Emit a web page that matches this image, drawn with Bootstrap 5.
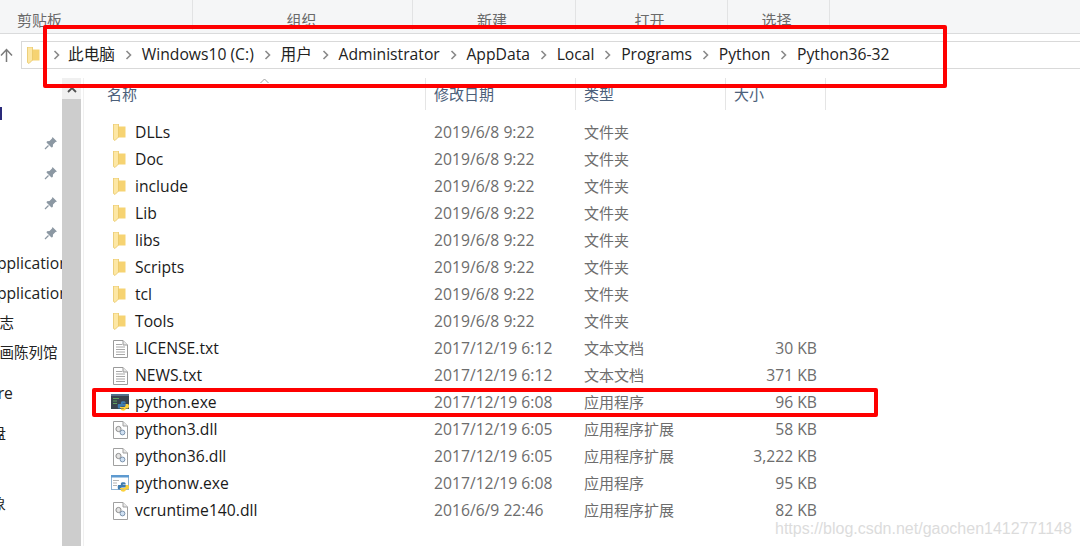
<!DOCTYPE html>
<html lang="zh-CN">
<head>
  <meta charset="UTF-8">
  <title>Python36-32</title>
  <link href="https://cdn.jsdelivr.net/npm/bootstrap@5.3.0/dist/css/bootstrap.min.css" rel="stylesheet">
  <style>
    html, body { height: 100%; }
    body {
      position: relative;
      width: 1080px;
      height: 546px;
      overflow: hidden;
      background: #fff;
      font-family: "Open Sans", "Noto Sans CJK SC", sans-serif;
      font-size: 15.7px;
      color: #1a1a1a;
    }
    .ribbon { height: 34px; background: #f5f6f7; border-bottom: 1px solid #dadbdc; }
    .rib-group { height: 30px; border-right: 1px solid #e2e3e4; color: #6a6a6a; font-size: 15px; line-height: 40px; text-align: center; }
    .rib-1 { width: 193px; padding-right: 113px; }
    .rib-2 { width: 220px; padding-right: 2px; }
    .rib-3 { width: 163px; padding-right: 4px; }
    .rib-4 { width: 152px; padding-right: 4px; }
    .rib-5 { width: 102px; padding-right: 4px; }
    .addr-row { height: 44px; padding-top: 7px; }
    .up-arrow { width: 21px; height: 28px; }
    .addr-bar { height: 28px; flex: 1; border: 1px solid #d9d9d9; border-right: 0; padding-left: 5px; color: #222; }
    .crumb-sep { width: 26.7px; }
    .crumb-sep.first { width: 24px; margin-left: 4px; }
    .content { height: 468px; }
    .side-pane { width: 62px; overflow: hidden; flex: none; color: #222; }
    .side-row { height: 30px; line-height: 30px; white-space: nowrap; }
    .side-row.first { margin-top: 20px; padding-top: 9px; }
    .side-row.gap-10 { margin-top: 10px; }
    .side-row.gap-40 { margin-top: 40px; }
    .side-pin { padding-left: 44px; }
    .side-edge { width: 2px; height: 13px; background: #2a2a7a; }
    .clip-app { margin-left: -13px; }
    .clip-cjk { margin-left: -15px; font-size: 14.5px; }
    .clip-half { margin-left: -24px; font-size: 15px; }
    .clip-re { margin-left: -26px; }
    .scroll-track { width: 19px; flex: none; background: #cdcdcd; }
    .scroll-up { height: 21px; background: #f0f0f0; }
    .divider { width: 3px; flex: none; border-right: 1px solid #f0f0f0; }
    .file-pane { flex: 1; }
    .col-head { height: 32px; color: #4c607a; font-size: 15px; line-height: 32px; }
    .head-name { width: 342px; padding-left: 23px; border-right: 1px solid #e5e5e5; }
    .head-date { width: 150px; padding-left: 8px; border-right: 1px solid #e5e5e5; }
    .head-size { width: 100px; padding-left: 8px; border-right: 1px solid #e5e5e5; }
    .sort-mark { position: absolute; left: 260px; top: 78px; }
    .file-list { padding-top: 9px; }
    .file-row { height: 27px; line-height: 27px; }
    .f-icon { width: 51px; flex: none; padding-left: 29px; }
    .f-icon svg { display: block; }
    .f-icon .wide-ico { margin-left: -2px; }
    .f-name { width: 299px; flex: none; }
    .f-date { width: 150px; flex: none; color: #6d6d6d; }
    .f-type { width: 150px; flex: none; color: #6d6d6d; font-size: 15px; }
    .f-size { width: 83px; flex: none; color: #6d6d6d; text-align: right; }
    .red-box { position: absolute; border: 4px solid #fe0000; border-radius: 2px; }
    .red-addr { left: 43px; top: 25px; width: 904px; height: 63px; }
    .red-exe { left: 92px; top: 388px; width: 786px; height: 29px; }
    .water { position: absolute; left: 775px; top: 519px; font-family: "Liberation Sans", sans-serif; font-size: 16px; line-height: 20px; color: #dcdcdc; }
  </style>
</head>
<body>
  <svg width="0" height="0" class="position-absolute">
    <defs>
      <symbol id="folder" viewBox="0 0 13 17">
        <rect x="5" y="2.500" width="7.500" height="11" fill="#f6d372"/>
        <path d="M.5 0H5.500V13L2 16.500L.5 15.500Z" fill="#fde7a4" stroke="#e9c766" stroke-width=".8"/>
      </symbol>
      <symbol id="textfile" viewBox="0 0 15 18">
        <path d="M.5.5H10L14.500 5V17.500H.5Z" fill="#fff" stroke="#9a9a9a"/>
        <path d="M10 .5V5H14.500" fill="#e8e8e8" stroke="#9a9a9a"/>
        <path d="M3 4.500H9M3 7H12M3 9.500H12M3 12H12M3 14.500H12" stroke="#a8a8a8"/>
      </symbol>
      <symbol id="dllfile" viewBox="0 0 15 18">
        <path d="M.5.5H10L14.500 5V17.500H.5Z" fill="#fff" stroke="#a0a0a0"/>
        <path d="M10 .5V5H14.500" fill="#e8e8e8" stroke="#a0a0a0"/>
        <circle cx="5.500" cy="8" r="2.600" fill="#e4e4e4" stroke="#8d8d8d"/>
        <circle cx="9.500" cy="11.500" r="2.400" fill="#cfe0f2" stroke="#7c93ad"/>
      </symbol>
      <symbol id="pysnake" viewBox="0 0 12 12">
        <path d="M3.500 5V2.500C3.500 .5 8.500 .5 8.500 2.500V3.500H5.500V4H9.500V6.500H5C4 6.500 3.500 7 3.500 8V8.500H1.500C.5 8.500 0 7.500 0 6C0 4.500 .5 4 1.500 4H3.500Z" fill="#3f7cb0"/>
        <path d="M8.500 7V9.500C8.500 11.500 3.500 11.500 3.500 9.500V8.500H6.500V8H2.500V7H7C8 7 8.500 6 8.500 5V4H10.500C11.500 4 12 4.800 12 6C12 7.500 11.500 8.500 10.500 8.500H8.500Z" fill="#fbd13c"/>
      </symbol>
      <symbol id="pyexe" viewBox="0 0 18 18">
        <rect x="0" y="0" width="18" height="15" fill="#39434d"/>
        <rect x="0" y="0" width="18" height="2" fill="#56718c"/>
        <path d="M2 4.500H8M2 7H6M2 9.500H6" stroke="#5fa05f"/>
        <use href="#pysnake" x="6.500" y="6" width="11.500" height="12"/>
      </symbol>
      <symbol id="pywexe" viewBox="0 0 18 18">
        <rect x=".5" y=".5" width="17" height="14" fill="#fff" stroke="#8fb3d3"/>
        <rect x="0" y="0" width="18" height="2.500" fill="#5d9ad0"/>
        <path d="M2 5.500H8M2 8H6M2 10.500H6" stroke="#b5b5b5"/>
        <use href="#pysnake" x="6.500" y="6" width="11.500" height="12"/>
      </symbol>
      <symbol id="pin" viewBox="0 0 14 14">
        <path d="M8.500 1 L13 5.500 L11.500 6 L9 8.500 L8.800 11 L7.500 11.500 L2.500 6.500 L3 5.200 L5.500 5 L8 2.500Z" fill="#8c98a3"/>
        <path d="M4.500 9.500 L1 13" stroke="#8c98a3" stroke-width="1.200"/>
      </symbol>
      <symbol id="chev" viewBox="0 0 7 10">
        <path d="M1.500 1 L5.500 5 L1.500 9" fill="none" stroke="#8a8a8a" stroke-width="1.600"/>
      </symbol>
    </defs>
  </svg>

  <div class="ribbon d-flex">
    <div class="rib-group rib-1">剪贴板</div>
    <div class="rib-group rib-2">组织</div>
    <div class="rib-group rib-3">新建</div>
    <div class="rib-group rib-4">打开</div>
    <div class="rib-group rib-5">选择</div>
  </div>

  <div class="addr-row d-flex">
    <div class="up-arrow d-flex align-items-center">
      <svg width="13" height="14" viewBox="0 0 13 14"><path d="M6.500 14V2M1 7.500L6.500 1.500L12 7.500" fill="none" stroke="#7a7a7a" stroke-width="1.500"/></svg>
    </div>
    <div class="addr-bar d-flex align-items-center">
      <svg width="13" height="17"><use href="#folder"/></svg>
      <span class="crumb-sep first d-flex justify-content-center"><svg width="7" height="10"><use href="#chev"/></svg></span>
      <span>此电脑</span>
      <span class="crumb-sep d-flex justify-content-center"><svg width="7" height="10"><use href="#chev"/></svg></span>
      <span>Windows10 (C:)</span>
      <span class="crumb-sep d-flex justify-content-center"><svg width="7" height="10"><use href="#chev"/></svg></span>
      <span>用户</span>
      <span class="crumb-sep d-flex justify-content-center"><svg width="7" height="10"><use href="#chev"/></svg></span>
      <span>Administrator</span>
      <span class="crumb-sep d-flex justify-content-center"><svg width="7" height="10"><use href="#chev"/></svg></span>
      <span>AppData</span>
      <span class="crumb-sep d-flex justify-content-center"><svg width="7" height="10"><use href="#chev"/></svg></span>
      <span>Local</span>
      <span class="crumb-sep d-flex justify-content-center"><svg width="7" height="10"><use href="#chev"/></svg></span>
      <span>Programs</span>
      <span class="crumb-sep d-flex justify-content-center"><svg width="7" height="10"><use href="#chev"/></svg></span>
      <span>Python</span>
      <span class="crumb-sep d-flex justify-content-center"><svg width="7" height="10"><use href="#chev"/></svg></span>
      <span>Python36-32</span>
    </div>
  </div>

  <div class="content d-flex">
    <div class="side-pane">
      <div class="side-row first"><div class="side-edge"></div></div>
      <div class="side-row side-pin d-flex align-items-center"><svg width="14" height="14"><use href="#pin"/></svg></div>
      <div class="side-row side-pin d-flex align-items-center"><svg width="14" height="14"><use href="#pin"/></svg></div>
      <div class="side-row side-pin d-flex align-items-center"><svg width="14" height="14"><use href="#pin"/></svg></div>
      <div class="side-row side-pin d-flex align-items-center"><svg width="14" height="14"><use href="#pin"/></svg></div>
      <div class="side-row clip-app">Application</div>
      <div class="side-row clip-app">Application</div>
      <div class="side-row clip-cjk">日志</div>
      <div class="side-row clip-cjk">图画陈列馆</div>
      <div class="side-row gap-10 clip-re">Store</div>
      <div class="side-row gap-10 clip-half">磁盘</div>
      <div class="side-row gap-40 clip-half">对象</div>
    </div>
    <div class="scroll-track">
      <div class="scroll-up d-flex justify-content-center pt-2">
        <svg width="10" height="7" viewBox="0 0 10 7"><path d="M1 6L5 2L9 6" fill="none" stroke="#505050" stroke-width="1.800"/></svg>
      </div>
    </div>
    <div class="divider"></div>
    <div class="file-pane">
      <div class="col-head d-flex">
        <div class="head-name">名称</div>
        <div class="head-date">修改日期</div>
        <div class="head-date">类型</div>
        <div class="head-size">大小</div>
      </div>
      <div class="file-list">
        <div class="file-row d-flex"><div class="f-icon d-flex align-items-center"><svg width="13" height="17"><use href="#folder"/></svg></div><div class="f-name">DLLs</div><div class="f-date">2019/6/8 9:22</div><div class="f-type">文件夹</div></div>
        <div class="file-row d-flex"><div class="f-icon d-flex align-items-center"><svg width="13" height="17"><use href="#folder"/></svg></div><div class="f-name">Doc</div><div class="f-date">2019/6/8 9:22</div><div class="f-type">文件夹</div></div>
        <div class="file-row d-flex"><div class="f-icon d-flex align-items-center"><svg width="13" height="17"><use href="#folder"/></svg></div><div class="f-name">include</div><div class="f-date">2019/6/8 9:22</div><div class="f-type">文件夹</div></div>
        <div class="file-row d-flex"><div class="f-icon d-flex align-items-center"><svg width="13" height="17"><use href="#folder"/></svg></div><div class="f-name">Lib</div><div class="f-date">2019/6/8 9:22</div><div class="f-type">文件夹</div></div>
        <div class="file-row d-flex"><div class="f-icon d-flex align-items-center"><svg width="13" height="17"><use href="#folder"/></svg></div><div class="f-name">libs</div><div class="f-date">2019/6/8 9:22</div><div class="f-type">文件夹</div></div>
        <div class="file-row d-flex"><div class="f-icon d-flex align-items-center"><svg width="13" height="17"><use href="#folder"/></svg></div><div class="f-name">Scripts</div><div class="f-date">2019/6/8 9:22</div><div class="f-type">文件夹</div></div>
        <div class="file-row d-flex"><div class="f-icon d-flex align-items-center"><svg width="13" height="17"><use href="#folder"/></svg></div><div class="f-name">tcl</div><div class="f-date">2019/6/8 9:22</div><div class="f-type">文件夹</div></div>
        <div class="file-row d-flex"><div class="f-icon d-flex align-items-center"><svg width="13" height="17"><use href="#folder"/></svg></div><div class="f-name">Tools</div><div class="f-date">2019/6/8 9:22</div><div class="f-type">文件夹</div></div>
        <div class="file-row d-flex"><div class="f-icon d-flex align-items-center"><svg width="15" height="18"><use href="#textfile"/></svg></div><div class="f-name">LICENSE.txt</div><div class="f-date">2017/12/19 6:12</div><div class="f-type">文本文档</div><div class="f-size">30 KB</div></div>
        <div class="file-row d-flex"><div class="f-icon d-flex align-items-center"><svg width="15" height="18"><use href="#textfile"/></svg></div><div class="f-name">NEWS.txt</div><div class="f-date">2017/12/19 6:12</div><div class="f-type">文本文档</div><div class="f-size">371 KB</div></div>
        <div class="file-row d-flex"><div class="f-icon d-flex align-items-center"><svg class="wide-ico" width="18" height="18"><use href="#pyexe"/></svg></div><div class="f-name">python.exe</div><div class="f-date">2017/12/19 6:08</div><div class="f-type">应用程序</div><div class="f-size">96 KB</div></div>
        <div class="file-row d-flex"><div class="f-icon d-flex align-items-center"><svg width="15" height="18"><use href="#dllfile"/></svg></div><div class="f-name">python3.dll</div><div class="f-date">2017/12/19 6:05</div><div class="f-type">应用程序扩展</div><div class="f-size">58 KB</div></div>
        <div class="file-row d-flex"><div class="f-icon d-flex align-items-center"><svg width="15" height="18"><use href="#dllfile"/></svg></div><div class="f-name">python36.dll</div><div class="f-date">2017/12/19 6:05</div><div class="f-type">应用程序扩展</div><div class="f-size">3,222 KB</div></div>
        <div class="file-row d-flex"><div class="f-icon d-flex align-items-center"><svg class="wide-ico" width="18" height="18"><use href="#pywexe"/></svg></div><div class="f-name">pythonw.exe</div><div class="f-date">2017/12/19 6:08</div><div class="f-type">应用程序</div><div class="f-size">95 KB</div></div>
        <div class="file-row d-flex"><div class="f-icon d-flex align-items-center"><svg width="15" height="18"><use href="#dllfile"/></svg></div><div class="f-name">vcruntime140.dll</div><div class="f-date">2016/6/9 22:46</div><div class="f-type">应用程序扩展</div><div class="f-size">82 KB</div></div>
      </div>
    </div>
  </div>

  <svg class="sort-mark" width="9" height="6" viewBox="0 0 9 6"><path d="M.5 5L4.500 1L8.500 5" fill="none" stroke="#a0a0a0"/></svg>
  <div class="red-box red-addr"></div>
  <div class="red-box red-exe"></div>
  <div class="water">https://blog.csdn.net/gaochen1412771148</div>
  <script src="https://cdn.jsdelivr.net/npm/bootstrap@5.3.0/dist/js/bootstrap.bundle.min.js"></script>
</body>
</html>
